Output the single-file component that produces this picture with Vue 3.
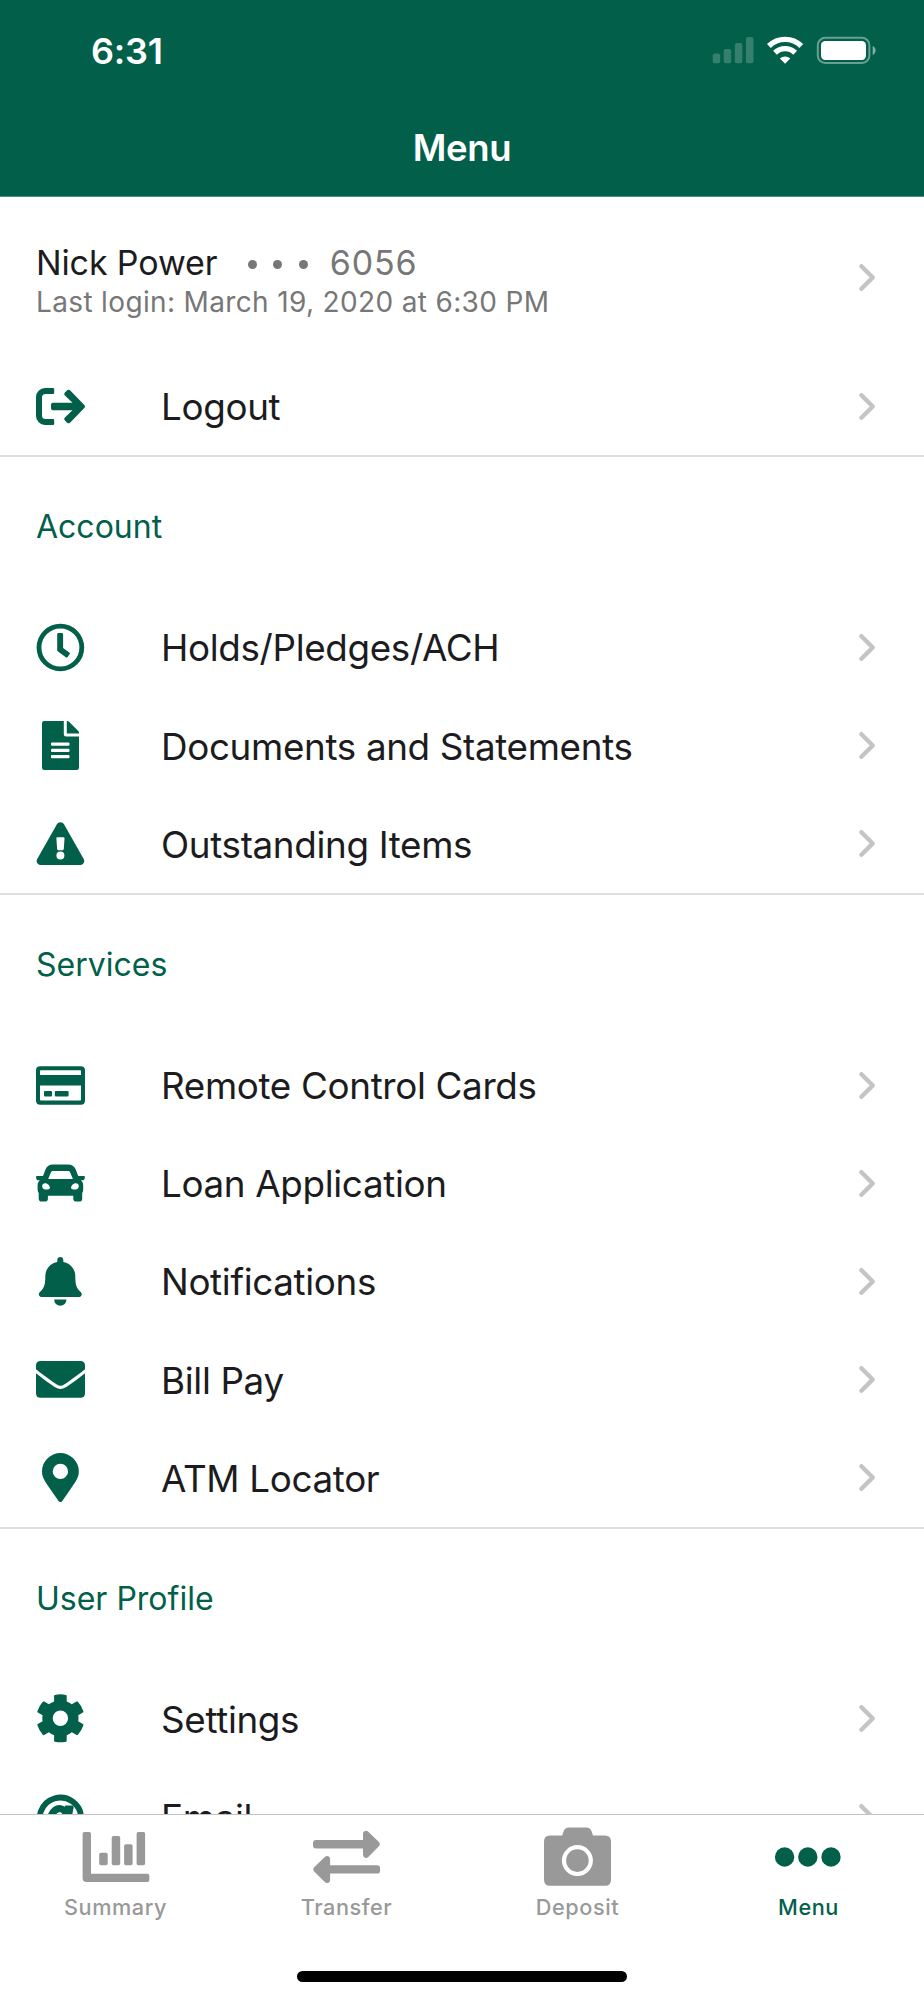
<template>
  <div class="screen">
    <header class="header">
      <div class="status">
        <span class="status__time">6:31</span>
        <svg class="status__icons" viewBox="0 0 166 30" aria-hidden="true">
          <g fill="#fff" fill-opacity="0.2">
            <rect x="0.7" y="18.5" width="7.5" height="9.7" rx="2" />
            <rect x="11.7" y="14" width="7.5" height="14.2" rx="2" />
            <rect x="22.8" y="8" width="7.5" height="20.2" rx="2" />
            <rect x="34" y="2" width="7.5" height="26.2" rx="2" />
          </g>
          <g fill="none" stroke="#fff" stroke-width="5.4">
            <path d="M56.9 11a23 23 0 0 1 32.4 0" />
            <path d="M63 17.7a14.5 14.5 0 0 1 20.2 0" />
          </g>
          <path d="M73.1 28.8l-5.2-5.3a7.6 7.6 0 0 1 10.4 0z" fill="#fff" />
          <rect x="105.8" y="2.8" width="51.6" height="25.2" rx="7.5" fill="none" stroke="#fff" stroke-opacity="0.4" stroke-width="2" />
          <rect x="109" y="6" width="45" height="19" rx="4.2" fill="#fff" />
          <path d="M160.7 11v9c1.7-.8 2.9-2.5 2.9-4.5s-1.2-3.7-2.9-4.5z" fill="#fff" fill-opacity="0.5" />
        </svg>
      </div>
      <h1 class="header__title">Menu</h1>
    </header>

    <main class="content">
      <div class="profile">
        <div class="profile__text">
          <div class="profile__name">
            <span>Nick Power</span>
            <span class="profile__dots" aria-hidden="true"><i></i><i></i><i></i></span>
            <span class="profile__number">6056</span>
          </div>
          <div class="profile__login">Last login: March 19, 2020 at 6:30 PM</div>
        </div>
        <svg class="chevron" viewBox="0 0 18 29"><path d="M3.4 3.2l11.3 11.3L3.4 25.8" /></svg>
      </div>

      <section v-for="section in sections" :key="section.id" class="section">
        <h2 v-if="section.title" class="section__title">{{ section.title }}</h2>
        <div v-for="item in section.items" :key="item.label" class="row">
          <svg class="row__icon" viewBox="0 0 49 49" aria-hidden="true" v-html="icons[item.icon]"></svg>
          <span class="row__label">{{ item.label }}</span>
          <svg class="chevron" viewBox="0 0 18 29"><path d="M3.4 3.2l11.3 11.3L3.4 25.8" /></svg>
        </div>
      </section>
    </main>

    <nav class="tabs">
      <div class="tabs__list">
        <div
          v-for="tab in tabs"
          :key="tab.label"
          class="tab"
          :class="{ 'tab--active': tab.active }"
        >
          <svg class="tab__icon" viewBox="0 0 67 60" aria-hidden="true" v-html="icons[tab.icon]"></svg>
          <span class="tab__label">{{ tab.label }}</span>
        </div>
      </div>
      <div class="home-indicator"></div>
    </nav>
  </div>
</template>

<script setup>
const sections = [
  {
    id: 'session',
    items: [{ label: 'Logout', icon: 'logout' }]
  },
  {
    id: 'account',
    title: 'Account',
    items: [
      { label: 'Holds/Pledges/ACH', icon: 'clock' },
      { label: 'Documents and Statements', icon: 'file' },
      { label: 'Outstanding Items', icon: 'warning' }
    ]
  },
  {
    id: 'services',
    title: 'Services',
    items: [
      { label: 'Remote Control Cards', icon: 'card' },
      { label: 'Loan Application', icon: 'car' },
      { label: 'Notifications', icon: 'bell' },
      { label: 'Bill Pay', icon: 'envelope' },
      { label: 'ATM Locator', icon: 'pin' }
    ]
  },
  {
    id: 'profile',
    title: 'User Profile',
    items: [
      { label: 'Settings', icon: 'gear' },
      { label: 'Email', icon: 'at' }
    ]
  }
]

const tabs = [
  { label: 'Summary', icon: 'chart' },
  { label: 'Transfer', icon: 'transfer' },
  { label: 'Deposit', icon: 'camera' },
  { label: 'Menu', icon: 'dots', active: true }
]

const icons = {
  logout: `
    <path d="M17 6H9a9 9 0 0 0-9 9v19a9 9 0 0 0 9 9h8q1.2 0 1.2-1.2v-3.6q0-1.2-1.2-1.2H9.5a3.5 3.5 0 0 1-3.5-3.5v-18a3.5 3.5 0 0 1 3.5-3.5H17q1.2 0 1.2-1.2V7.2Q18.2 6 17 6z"/>
    <path d="M48.3 22.9L34 8.3q-1.4-1.3-2.8 0l-2.3 2.3q-1.3 1.4 0 2.8l7.6 7.4H17q-2 0-2 2v3.4q0 2 2 2h19.5l-7.6 7.4q-1.3 1.4 0 2.8l2.3 2.3q1.4 1.3 2.8 0l14.3-14.6q1.4-1.6 0-3.2z"/>`,
  clock: `
    <circle cx="24.4" cy="24.5" r="21.4" fill="none" stroke="currentColor" stroke-width="4.8"/>
    <path d="M22.4 10h3.5q1.2 0 1.2 1.2v13.7l6.2 4.5q1 .8.3 1.8l-2 2.7q-.8 1-1.8.3l-8.1-5.9q-.5-.4-.5-1V11.2Q21.2 10 22.4 10z"/>`,
  file: `
    <path fill-rule="evenodd" d="M8.3 0h19.5v13.2q0 2.3 2.3 2.3H43v31.2Q43 49 40.7 49H8.3Q6 49 6 46.7V2.3Q6 0 8.3 0zM16 21.5q-1 0-1 1v1.3q0 1 1 1h16.5q1 0 1-1v-1.3q0-1-1-1zM16 27.7q-1 0-1 1v1.3q0 1 1 1h16.5q1 0 1-1v-1.3q0-1-1-1zM16 33.9q-1 0-1 1v1.3q0 1 1 1h16.5q1 0 1-1v-1.3q0-1-1-1z"/>
    <path d="M30.8 0h.6q1 0 1.6.7l9.3 9.3q.7.7.7 1.6v.9H30.8z"/>`,
  warning: `
    <path fill-rule="evenodd" d="M28 5.3l19.7 34.6c1.6 2.7-.4 6.1-3.5 6.1H4.7c-3.1 0-5.1-3.4-3.5-6.1L20.9 5.3c1.6-2.7 5.5-2.7 7.1 0zM21.5 18.2q-1.2 0-1.1 1.2l.7 10.7q.1 1.1 1.2 1.1h4.3q1.1 0 1.2-1.1l.7-10.7q.1-1.2-1.1-1.2zM24.4 32.6a4 4 0 1 0 0 8 4 4 0 0 0 0-8z"/>`,
  card: `
    <path fill-rule="evenodd" d="M4.2 5.3h40.6Q49 5.3 49 9.5v30q0 4.2-4.2 4.2H4.2Q0 43.700 0 39.500v-30Q0 5.3 4.2 5.3zM4.7 9.2q-.7 0-.7.7v4h41v-4q0-.7-.7-.7zM4 24.4v14.4q0 .7.7.7h39.6q.7 0 .7-.7V24.4z"/>
    <rect x="8" y="30" width="8" height="5.4" rx="1"/>
    <rect x="18.8" y="30" width="13.8" height="5.4" rx="1"/>`,
  car: `
    <path fill-rule="evenodd" d="M17 5.6h15.2c3.5 0 6.2 1.8 7.5 5l2.5 6.3h5.6q1.4 0 1.1 1.3l-.5 2q-.3 1-1.3 1h-2.2c1.5 1.3 2.3 3 2.3 5v4.6q0 2-1 3.3v5.7q0 2.8-2.8 2.8h-3.2q-2.9 0-2.9-2.8v-3.1H11.9v3.1q0 2.8-2.9 2.8H5.6q-2.9 0-2.9-2.8v-5.7q-1.1-1.3-1.1-3.3v-4.6c0-2 .9-3.7 2.3-5H1.8q-1 0-1.3-1l-.5-2q-.3-1.3 1.1-1.3H7l2.5-6.3c1.3-3.2 4-5 7.5-5zM17 11.9c-1.1 0-1.7.5-2.1 1.5L12.2 20h24.7l-2.7-6.6c-.4-1-1-1.5-2.1-1.5zM9.3 24.3c-2 0-3.1 1.1-3.1 3s1.2 3.1 3.2 3.1c2.7 0 4.5-.1 4.5-1.7s-2.2-4.4-4.6-4.4zM39.7 24.3c-2.4 0-4.6 2.7-4.6 4.4s1.8 1.7 4.5 1.7c2 0 3.2-1.2 3.2-3.1s-1.1-3-3.1-3z"/>`,
  bell: `
    <path d="M24.3 0c1.8 0 3 1.3 3 3v1.9c7.1 1.4 12 7 12 14.2 0 9.3 1.2 12.2 5.6 16.1 1.7 1.7.8 4.7-1.7 4.7H5.4c-2.5 0-3.4-3-1.7-4.7 4.4-3.9 5.6-6.8 5.6-16.1 0-7.2 4.9-12.8 12-14.2V3c0-1.7 1.2-3 3-3z"/>
    <path d="M18.1 42.5h12.4a6.2 6.2 0 0 1-12.4 0z"/>`,
  envelope: `
    <path d="M4.6 6h39.8Q49 6 49 10.6v3.7C45 17.5 39 22 31.3 27.6c-1.8 1.3-4.6 3.3-6.8 3.2-2.2.1-5-1.9-6.8-3.2C10 22 4 17.5 0 14.3v-3.7Q0 6 4.6 6z"/>
    <path d="M0 18.2c4.6 3.6 9.8 7.5 15.8 11.9 2.1 1.5 5.4 3.9 8.7 3.8 3.3.1 6.6-2.3 8.7-3.8 6-4.4 11.2-8.3 15.8-11.9v20q0 4.6-4.6 4.6H4.6Q0 42.8 0 38.2z"/>`,
  pin: `
    <path fill-rule="evenodd" d="M24.4 0a18.4 18.4 0 0 1 18.4 18.4c0 6-2.8 9.7-8.2 17.6L26.3 48a2.3 2.3 0 0 1-3.8 0L14.2 36C8.8 28.1 6 24.4 6 18.4A18.4 18.4 0 0 1 24.4 0zM24.4 10.7a7.7 7.7 0 1 0 0 15.4 7.7 7.7 0 0 0 0-15.4z"/>`,
  gear: `
    <path fill-rule="evenodd" d="M18.9.9q5.5-1.2 11 0 .8.2.8 1v5.5q2.8 1 5.1 2.9l4.7-2.7q.8-.5 1.4.2 3.8 4.2 5.5 9.5.2.8-.5 1.3l-4.7 2.7q.6 3 0 6l4.7 2.7q.7.5.5 1.3-1.7 5.3-5.5 9.5-.6.6-1.3.2l-4.8-2.7q-2.3 1.9-5.1 2.9v5.5q0 .8-.8 1-5.5 1.2-11 0-.8-.2-.8-1v-5.5q-2.8-1-5.2-2.9l-4.7 2.7q-.8.5-1.4-.2-3.7-4.2-5.4-9.5-.3-.8.4-1.3l4.8-2.7q-.6-3 0-6l-4.8-2.7q-.7-.5-.4-1.3 1.7-5.3 5.4-9.5.6-.6 1.4-.2l4.7 2.7q2.4-1.9 5.2-2.9V1.9q0-.8.8-1zM24.4 16.5a7.7 7.7 0 1 0 0 15.4 7.7 7.7 0 0 0 0-15.4z"/>`,
  at: `
    <g fill="none" stroke="currentColor">
      <path stroke-width="5.8" d="M39.5 39.5A20.7 20.7 0 1 1 45.1 24.5c0 6-3.6 9.5-8.2 9.5-3.5 0-5-2-4.4-5.5"/>
      <ellipse cx="22.5" cy="26" rx="8" ry="10.5" stroke-width="7" transform="rotate(15 22.5 26)"/>
    </g>
    <path d="M29 12.6h7.2q1.8 0 1.4 1.8L34.8 30h-7z"/>`,
  chart: `
    <path d="M2.3 5H7.2Q9 5 9 6.7V46.700H65.500q1.8 0 1.8 1.8v4.7q0 1.8-1.8 1.8H4.7Q.6 55 .6 51V6.7Q.6 5 2.3 5z"/>
    <rect x="17.2" y="25.7" width="8.5" height="12.6" rx="1.7"/>
    <rect x="29.7" y="9" width="8.5" height="29.3" rx="1.7"/>
    <rect x="42.1" y="17.2" width="8.5" height="21.1" rx="1.7"/>
    <rect x="54.6" y="5" width="8.5" height="33.3" rx="1.7"/>`,
  transfer: `
    <path d="M3.2 13H50V7c0-2.8 3.3-4.2 5.3-2.2l10.6 10.3q1.9 2.1 0 4.2L55.3 30c-2 2-5.3.5-5.3-2.2v-6.3H3.2Q0 21.5 0 18.3v-2.1Q0 13 3.2 13z"/>
    <path d="M63.9 38.2H17.1v-6.1c0-2.8-3.3-4.2-5.3-2.2L1.2 40.3q-1.9 2.1 0 4.2l10.6 10.6c2 2 5.3.5 5.3-2.2v-6.3h46.8q3.2 0 3.2-3.2v-2q0-3.2-3.2-3.2z"/>`,
  camera: `
    <path d="M6 8.5h12.2l1.5-4.4Q21 .4 24.8.4h17.6q3.8 0 5.1 3.7L49 8.500h12q6 0 6 6v38.2q0 6-6 6H6q-6 0-6-6V14.5q0-6 6-6z"/>
    <circle cx="33.4" cy="33.6" r="13.4" fill="none" stroke="#fff" stroke-width="4.2"/>`,
  dots: `
    <circle cx="9.6" cy="30" r="9.7"/>
    <circle cx="32.8" cy="30" r="9.7"/>
    <circle cx="56" cy="30" r="9.7"/>`
}
</script>

<style>
body {
  margin: 0;
  background: #fff;
}
</style>

<style scoped>
.screen {
  --green: #02604a;
  display: flex;
  flex-direction: column;
  width: 924px;
  height: 2000px;
  overflow: hidden;
  background: #fff;
  color: #1c1c1e;
  font-family: Inter, "Liberation Sans", sans-serif;
}

.header {
  box-sizing: border-box;
  flex: none;
  height: 197px;
  border-bottom: 1px solid #4f8e7f;
  background: var(--green);
  color: #fff;
}

.status {
  display: flex;
  align-items: center;
  justify-content: space-between;
  height: 100px;
  padding: 0 46px 0 91px;
}

.status__time {
  padding-top: 1px;
  font-size: 36px;
  font-weight: 600;
  letter-spacing: -0.2px;
}

.status__icons {
  width: 166px;
  height: 30px;
}

.header__title {
  margin: 0;
  font-size: 36.5px;
  font-weight: 600;
  letter-spacing: -0.3px;
  line-height: 96px;
  text-align: center;
}

.content {
  flex: 1;
  min-height: 0;
  overflow: hidden;
}

.profile {
  box-sizing: border-box;
  display: flex;
  align-items: center;
  justify-content: space-between;
  height: 160.2px;
  padding: 0 48px 0 36px;
}

.profile__text {
  padding-top: 8px;
}

.profile__name {
  display: flex;
  align-items: center;
  font-size: 34px;
  letter-spacing: -0.13px;
  line-height: 40px;
}

.profile__dots {
  display: flex;
  gap: 16.5px;
  margin: 2px 22px 0 30.5px;
}

.profile__dots i {
  width: 9px;
  height: 9px;
  border-radius: 50%;
  background: #777;
}

.profile__number,
.profile__login {
  color: #777;
}

.profile__number {
  letter-spacing: 0.8px;
}

.profile__login {
  margin-top: 2px;
  font-size: 28px;
  letter-spacing: 0.35px;
  line-height: 34px;
}

.chevron {
  flex: none;
  width: 18px;
  height: 29px;
  fill: none;
  stroke: #c4c4c6;
  stroke-width: 4.4;
  stroke-linecap: round;
  stroke-linejoin: round;
}

.section {
  border-bottom: 2px solid #dedede;
}

.section__title {
  height: 141px;
  margin: 0;
  padding-left: 36px;
  color: var(--green);
  font-size: 32px;
  font-weight: 400;
  line-height: 140.6px;
}

.row {
  display: flex;
  align-items: center;
  height: 98.2px;
  padding: 0 48px 0 36px;
}

.row__icon {
  flex: none;
  width: 49px;
  height: 49px;
  color: var(--green);
  fill: currentColor;
}

.row__label {
  flex: 1;
  padding: 1px 0 0 76px;
  font-size: 36.8px;
  letter-spacing: -0.34px;
  white-space: nowrap;
}

.tabs {
  box-sizing: border-box;
  display: flex;
  flex: none;
  flex-direction: column;
  align-items: center;
  justify-content: space-between;
  height: 186px;
  padding: 12px 0 18px;
  border-top: 1px solid #c3c3c3;
  background: #fff;
}

.tabs__list {
  display: grid;
  grid-template-columns: repeat(4, 1fr);
  width: 100%;
}

.tab {
  display: flex;
  flex-direction: column;
  align-items: center;
  color: #999;
}

.tab--active {
  color: var(--green);
}

.tab__icon {
  width: 67px;
  height: 60px;
  overflow: visible;
  fill: currentColor;
}

.tab__label {
  margin-top: 7px;
  font-size: 21.7px;
  font-weight: 500;
  letter-spacing: 0.55px;
  line-height: 27px;
}

.home-indicator {
  width: 330px;
  height: 11px;
  border-radius: 6px;
  background: #000;
}
</style>
